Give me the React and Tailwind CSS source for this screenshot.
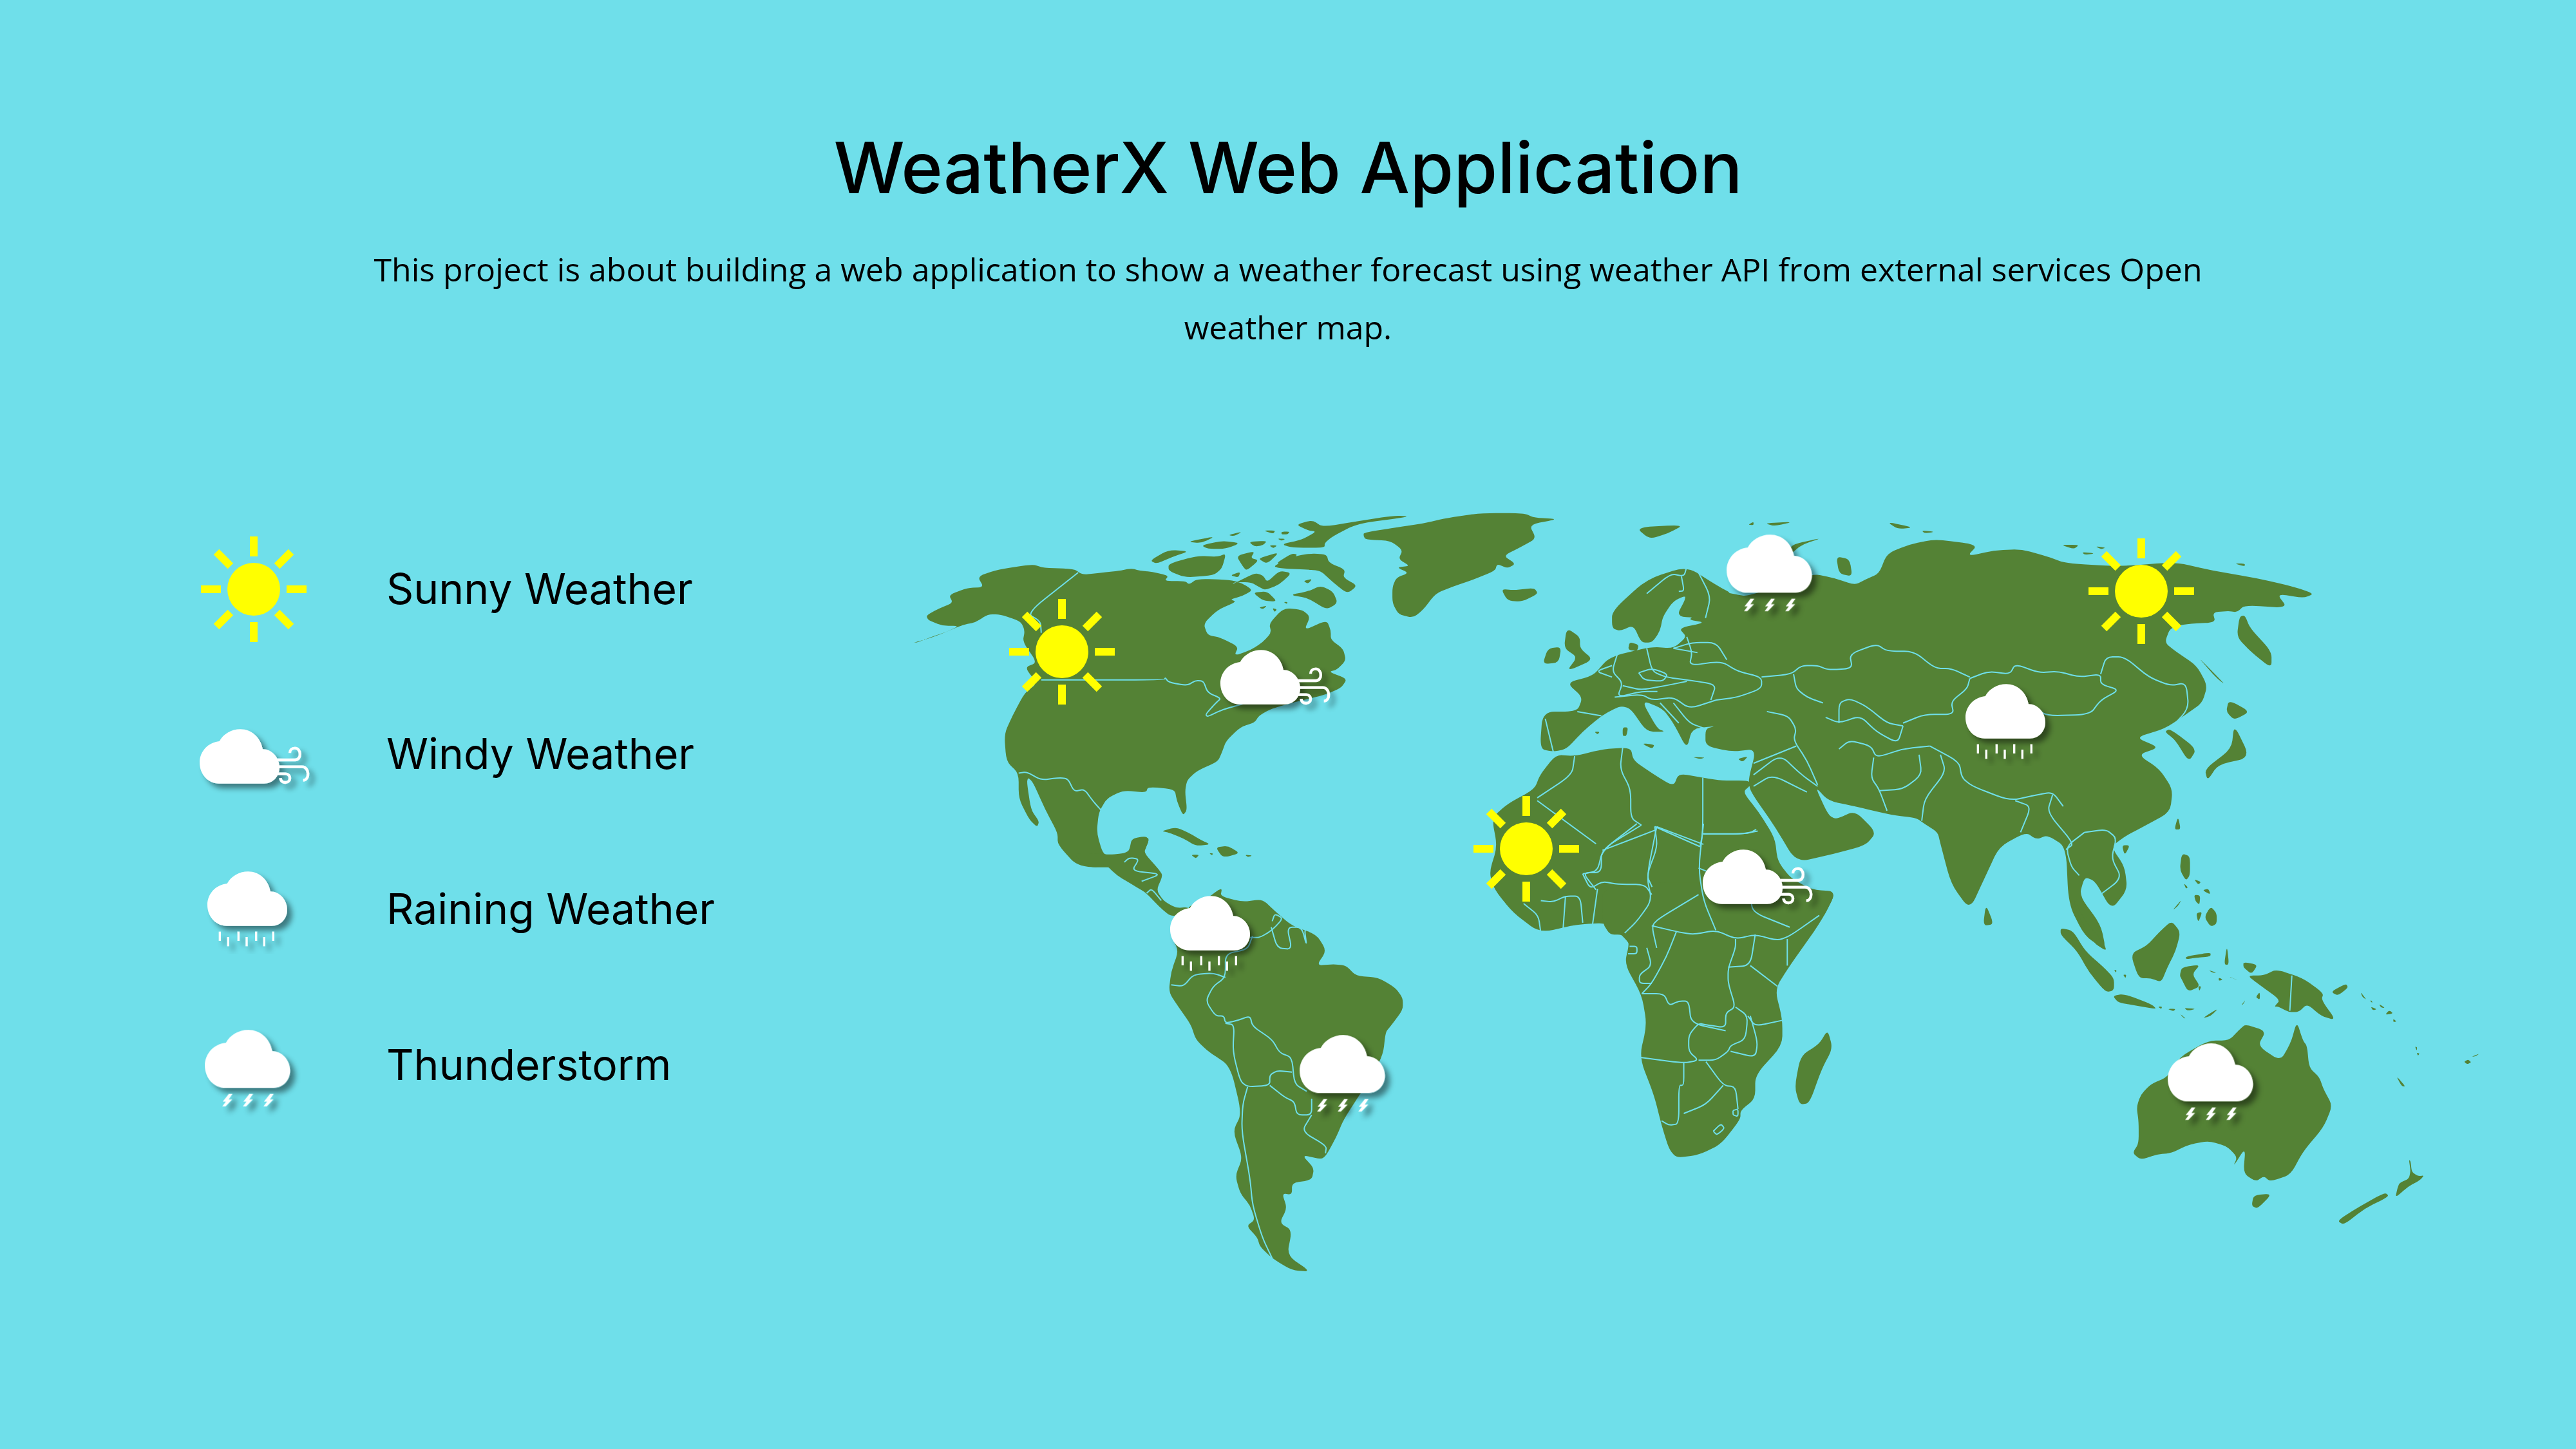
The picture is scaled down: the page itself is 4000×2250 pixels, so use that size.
const smooth = (s, closed = true) => {
  const p = s.trim().split(/\s+/).map((t) => t.split(",").map(Number));
  const f = 0.35;
  const to = (a, b) => [a[0] + (b[0] - a[0]) * f, a[1] + (b[1] - a[1]) * f];
  if (closed) {
    const n = p.length;
    let d = "";
    p.forEach((c, i) => {
      const a = to(c, p[(i - 1 + n) % n]);
      const b = to(c, p[(i + 1) % n]);
      d += `${i === 0 ? "M" : "L"}${a[0]} ${a[1]}Q${c[0]} ${c[1]} ${b[0]} ${b[1]}`;
    });
    return d + "Z";
  }
  let d = `M${p[0][0]} ${p[0][1]}`;
  for (let i = 1; i < p.length - 1; i++) {
    const a = to(p[i], p[i - 1]);
    const b = to(p[i], p[i + 1]);
    d += `L${a[0]} ${a[1]}Q${p[i][0]} ${p[i][1]} ${b[0]} ${b[1]}`;
  }
  const l = p[p.length - 1];
  return d + `L${l[0]} ${l[1]}`;
};

const Z4 = {
  land: [
    "28,614 38,612 70,590 110,565 140,540 100,540 65,515 60,495 90,465 125,440 115,405 160,375 200,372 185,325 235,295 320,272 345,288 420,292 440,318 480,310 530,300 560,290 580,300 610,305 650,322 640,345 690,345 700,360 720,335 800,340 830,355 855,385 830,410 800,425 815,435 770,470 735,530 745,580 775,590 820,630 810,670 850,645 880,610 900,570 895,530 930,462 975,470 995,500 980,560 1035,515 1045,560 1045,600 1075,640 1082,690 1060,730 1040,740 1085,770 1070,810 1030,840 960,870 900,900 870,930 860,960 825,980 790,1040 780,1090 770,1130 720,1170 695,1210 690,1260 695,1340 685,1365 670,1300 665,1250 600,1240 595,1265 540,1255 500,1290 480,1350 475,1440 490,1530 510,1540 560,1525 565,1480 605,1455 590,1530 560,1590 430,1590 380,1490 380,1440 350,1340 320,1220 308,1200 305,1220 315,1340 335,1390 330,1415 310,1380 285,1290 285,1180 255,1130 250,1010 270,930 300,830 330,790 300,720 330,700 295,610 300,560 290,520 240,490 210,490 180,525 150,535 110,565 75,590",
    "605,255 650,210 700,215 660,240 620,270",
    "650,270 720,235 770,240 790,225 780,290 760,320 690,330 650,300",
    "960,100 1000,80 1025,110 1110,85 1200,60 1240,65 1110,95 1050,150 1030,180 1030,200 950,200 925,185 975,165 1010,130 990,125",
    "695,175 765,150 730,180", "730,190 780,170 825,180 790,205 745,205", "795,145 830,130 810,150",
    "880,125 910,125 905,140", "925,130 945,130 940,142 925,142", "845,175 890,170 880,190 860,195", "915,160 935,162 925,170", "895,190 915,190 905,203",
    "815,235 860,215 850,245 870,255 840,300 830,280", "880,240 920,220 890,270 870,250", "910,270 950,225 965,230 940,270",
    "905,280 960,235 1000,225 1035,230 1040,265 1080,295 1075,330 1110,365 1085,400 1050,350 1020,300 985,295 920,290",
    "1020,365 1050,390 1062,440 1035,470 990,420 945,405 990,390",
    "800,320 825,305 820,330", "805,360 860,310 880,320 890,350 920,300 950,310 920,360 885,385 870,370 850,350 810,350",
    "855,395 890,390 915,435 880,430", "870,460 890,452 880,467", "903,463 914,468 908,480", "978,345 1000,335 990,357", "930,436 940,436 938,445",
    "1125,135 1210,110 1270,95 1330,70 1411,50 1515,50 1541,70 1600,75 1528,100 1545,160 1510,195 1465,235 1495,270 1475,290 1450,270 1445,300 1390,340 1340,370 1300,400 1270,470 1245,505 1210,490 1195,440 1195,370 1205,330 1235,310 1205,285 1238,280 1210,250 1220,210 1190,170 1130,165 1125,150",
    "1460,380 1490,385 1540,375 1550,400 1510,435 1475,430",
  ],
  lines: [
    "430,308 305,485 338,520 340,570",
    "340,775 640,775 642,765 650,785 695,800 715,778 735,780 745,830 778,855 765,875 740,925 745,935 780,905 830,880",
    "285,1180 305,1175 340,1210 385,1200 405,1205 420,1260 445,1250 465,1300 490,1350",
  ],
};

const Z6 = {
  land: [
    "-40,100 0,100 30,105 60,100 70,90 75,50 105,42 110,60 98,95 130,155 138,175 125,225 140,262 165,285 190,282 190,300 155,315 130,280 105,235 75,205 45,175 20,135 0,150 -30,130",
    "135,25 165,12 190,30 215,55 235,70 205,75 180,50 150,30", "245,80 270,75 295,100 260,115", "195,105 212,105 205,118", "305,105 320,108 310,113", "232,100 240,100 238,107",
    "190,280 230,250 250,225 258,220 255,245 300,265 340,255 365,295 400,345 450,375 470,430 450,480 485,475 510,480 530,515 575,520 610,555 625,590 625,630 600,685 590,705 585,780 560,860 540,910 505,1000 490,1060 470,1120 460,1135 420,1120 445,1165 440,1205 400,1215 400,1255 380,1250 390,1300 375,1350 400,1375 390,1460 438,1515 400,1510 360,1470 335,1430 330,1400 308,1360 325,1340 315,1290 295,1250 285,1190 300,1130 280,1040 298,980 275,820 230,770 205,730 195,680 170,620 150,570 155,500 170,430 155,380 160,330 190,300",
    "1030,335 1045,375 1070,375 1085,400 1075,475 1110,580 1120,680 1105,790 1135,920 1150,1020 1165,1100 1180,1130 1225,1120 1270,1085 1310,1000 1310,970 1340,930 1340,850 1395,750 1395,660 1380,560 1410,480 1470,340 1505,230 1460,240 1400,200 1030,200",
    "1487,697 1497,760 1475,830 1450,945 1430,950 1420,890 1432,785 1470,745",
  ],
  lines: [
    "360,330 365,305 382,320 360,360 335,385 315,385", "358,350 370,420 400,425 390,350 420,350 430,415 425,350 455,375",
    "320,380 310,425 265,440 265,520 240,550 225,600 245,650 262,650 265,675 290,665 315,650 320,685 360,730 375,775 400,790 405,880 430,905",
    "265,675 283,680 280,770 295,870 310,890 355,885 355,850 370,835 400,840", "355,885 385,925 405,940 410,985 440,985 440,930",
    "440,985 420,1040 470,1090 468,1115", "310,890 300,950 298,1040 315,1200 320,1290 340,1400 360,1470", "155,545 180,550 200,510 240,505 265,520",
    "60,130 70,115 90,120 75,160 135,170 95,195", "105,235 115,220 135,260",
    "1235,35 1310,35 1345,25", "1235,70 1140,10", "1140,10 1120,180 1130,260 1100,330 1075,370", "1235,0 1225,150 1235,260 1260,360",
    "1225,240 1145,320 1130,345 1140,420", "990,170 1020,160 1030,90 1100,0", "1030,90 1140,20",
    "990,170 1005,220 1030,195 1060,205 1115,205 1130,240", "1020,220 1010,340", "905,260 930,265 955,245 985,245 990,335", "955,245 950,360", "870,270 900,310 905,370",
    "1130,345 1180,365 1215,375 1260,360 1300,390 1340,375 1385,395 1410,380 1470,310", "1180,365 1160,450 1130,540 1110,575",
    "1300,390 1300,420 1285,490 1285,540 1300,620 1280,640 1280,690 1240,680 1225,675 1205,715 1205,770 1225,800 1195,810 1105,790",
    "1110,575 1155,575 1165,615 1185,600 1205,600 1210,675 1280,700", "1340,375 1330,480 1285,485", "1405,390 1405,480", "1330,480 1385,550",
    "1300,620 1325,650 1320,730 1290,750 1285,770 1260,800 1225,800", "1325,650 1340,685 1395,665", "1330,650 1345,740 1340,790 1290,770",
    "1240,805 1275,885 1300,890 1305,965", "1195,810 1195,885 1185,885 1185,1015 1165,1020 1150,1005", "1275,885 1240,950 1195,980",
    "1255,1040 1270,1015 1278,1030 1262,1053 1255,1040", "1295,970 1305,965 1305,990 1295,985 1295,970",
    "1085,415 1100,415 1100,440 1082,440", "1120,420 1130,480 1105,510 1105,540 1130,540",
    "1225,150 1270,180 1330,240 1335,300 1410,350",
  ],
};

const Z5 = {
  land: [
    "140,880 175,885 230,860 280,855 285,900 320,945 360,990 370,945 415,960 450,970 500,970 505,985 490,1010 520,1080 550,1170 555,1250 580,1310 620,1350 665,1355 640,1450 600,1530 570,1568 275,1568 280,1540 240,1465 180,1470 110,1500 60,1430 25,1350 15,1290 30,1200 20,1100 50,1050 100,1000 110,950",
    "135,870 110,860 115,730 180,730 190,680 160,630 210,605 235,550 260,530 320,505 360,510 385,470 370,440 420,420 385,410 430,370 440,345 420,300 470,320 500,330 620,250 660,265 700,290 720,270 745,250 760,180 800,150 850,130 930,150 910,190 960,170 1010,165 1060,190 1095,215 1200,225 1300,210 1370,240 1450,265 1520,295 1560,320 1540,335 1490,320 1510,370 1430,360 1415,385 1400,380 1370,385 1375,420 1320,425 1290,440 1280,490 1300,520 1340,570 1360,640 1350,700 1320,740 1280,790 1225,820 1270,855 1230,880 1270,930 1295,1000 1290,1080 1240,1130 1205,1165 1180,1200 1205,1270 1210,1350 1180,1420 1150,1320 1130,1305 1120,1370 1160,1470 1170,1560 1130,1510 1100,1400 1095,1200 1060,1160 1040,1175 1020,1150 970,1200 945,1300 915,1420 880,1330 860,1190 855,1150 830,1120 815,1100 770,1090 700,1060 650,1040 625,990 650,1090 665,1105 700,1075 740,1150 720,1195 660,1225 590,1255 550,1130 505,1010 500,970 515,860 470,870 420,850 420,790 440,780 395,790 385,860 360,770 340,720 300,690 330,790 345,800 310,800 280,720 260,710 225,745 190,800 160,860",
    "245,440 245,380 310,270 385,225 440,290 470,320 450,340 385,325 360,345 340,400 335,450 320,490 300,490 285,430 260,450",
    "365,400 385,330 370,310 440,300 445,345 430,370 420,405",
    "278,488 295,498 292,520 275,515",
    "1290,790 1340,860 1325,905 1300,830 1280,800",
    "580,150 640,125 600,150 575,190", "290,90 380,80 350,110 315,130", "530,75 585,70 550,85", "500,80 510,70 510,82", "760,70 810,90 780,95", "825,100 850,105 830,110", "1085,150 1120,150 1110,165", "1150,155 1170,160 1160,165", "1125,175 1150,180 1130,185", "1410,215 1430,215 1430,225",
    "665,190 690,200 695,260 670,250",
    "160,440 185,470 185,510 210,550 160,590 180,540 155,510", "125,510 150,505 145,560 115,565", "265,785 275,785 272,815 265,815", "212,800 222,800 218,810", "300,840 325,845 320,860", "395,888 420,890 410,895", "480,895 500,885 490,905",
    "1340,535 1395,640 1375,610", "1420,400 1430,395 1440,440 1480,520 1480,580 1440,520 1415,470",
    "1400,690 1440,730 1410,760 1395,730", "1410,775 1440,890 1380,915 1360,970 1355,930 1405,860", "1305,1095 1310,1140 1298,1140", "1200,1195 1215,1195 1205,1230", "945,1400 960,1470 940,1475",
  ],
  lines: [
    "385,470 395,525 390,570 450,555 480,590 525,610 525,650 480,680 440,690", "255,530 245,590 265,630 255,680 300,660 330,660", "310,510 320,590 345,610 385,620 440,635 430,690",
    "295,595 320,580 350,600 340,625 305,620 295,595", "245,570 215,590 245,610", "265,640 300,655 345,640 385,625", "250,680 300,670 320,690 360,680 390,720 440,690",
    "360,700 390,770 420,790", "335,700 370,770", "120,755 135,870", "180,730 225,745", "360,510 395,490 440,490 460,550", "360,510 405,525",
    "310,320 355,250 380,260 385,225", "375,260 380,310 370,312", "405,240 430,330 420,405",
    "525,610 580,600 600,570 630,570 650,585 695,580 690,530 740,495 760,520 810,520 850,580 880,580 915,610",
    "585,600 590,650 610,680 640,700", "915,615 910,650 880,695 885,740 830,740 790,770",
    "915,615 950,590 990,600 1000,565 1045,595 1080,590 1120,610 1160,600 1160,635 1195,655 1160,690 1140,740 1060,745 1040,720",
    "1160,600 1170,540 1205,540 1250,610 1290,640 1320,630 1325,720 1290,790",
    "670,770 670,700 690,685 720,710 760,770 790,780", "645,750 670,770 710,745 740,800 780,840 790,780", "535,730 575,745 590,790 585,830 610,900 630,985",
    "670,860 690,830 730,850 740,890 790,860 840,850", "735,890 730,960 745,1000 760,1075", "860,880 870,940 830,1035 825,1110", "745,1005 790,1000 825,950 820,880",
    "840,850 895,905 900,960 920,990 990,1040 1040,1020 1070,1010 1090,1060", "1000,1040 1030,1060 1010,1150", "1070,1020 1060,1080 1110,1190 1095,1210",
    "1130,1150 1095,1200 1105,1270 1120,1300", "1130,1150 1170,1140 1190,1170 1180,1240 1200,1310 1150,1380",
    "510,910 590,850", "510,950 560,880 600,950 630,990", "510,990 545,950 610,1010",
    "105,1030 170,950 175,885", "265,855 260,930 280,1000 280,1100 300,1125", "415,960 415,1150 410,1200", "415,1155 500,1155 515,1140", "325,1130 410,1200",
    "300,1125 225,1210 225,1290 190,1290 215,1350", "105,1040 215,1190", "325,1130 330,1200 310,1300 320,1340",
  ],
};

const Z7 = {
  land: [
    "470,385 500,395 530,470 575,530 600,570 600,615 580,622 540,550 510,470 470,410",
    "500,270 530,360 575,440 582,470 550,440 510,330",
    "740,358 762,400 750,470 730,530 715,585 690,570 660,570 640,480 680,450 710,400",
    "775,490 835,475 835,490 800,495 775,500", "765,530 810,520 790,555 810,600 780,620 765,575 760,560",
    "925,560 965,560 995,537 1060,570 1110,625 1105,650 1140,725 1105,710 1070,665 1050,695 1025,695 1000,675 990,675 1005,650 950,590",
    "915,510 950,520 935,555 915,530", "597,635 625,628 690,665 705,685 650,670 610,660",
    "707,675 717,675 715,684", "730,683 750,683 745,692", "770,680 800,683 780,690", "815,718 855,680 835,710", "760,700 775,720 768,715",
    "765,110 785,120 785,190 775,210 760,170", "770,220 780,235 775,240", "835,305 850,330 850,370 835,380 820,345", "800,330 815,325 805,365", "742,320 765,280 755,305",
    "795,262 810,265 808,300 798,285", "815,245 830,240 835,262", "795,205 812,215 805,225",
    "875,450 880,520 868,520", "830,540 850,550 840,550", "880,565 905,580 890,570", "855,568 865,575 855,580", "945,640 955,620 955,650", "910,670 920,650 915,665", "805,600 812,600 808,618",
    "1128,620 1165,590 1170,605 1145,635", "1200,620 1215,650 1205,640", "1225,650 1230,660 1225,658", "1225,675 1240,685 1230,688", "1245,665 1260,680 1250,678", "1270,688 1280,700 1260,705", "1280,720 1288,730 1280,732",
    "1333,822 1338,825 1337,838", "1337,845 1344,848 1340,856", "1452,878 1462,870 1470,880 1460,888", "1470,860 1490,848 1480,858", "1287,930 1310,970 1300,968",
    "1045,730 1060,800 1070,820 1075,900 1100,935 1110,980 1132,1040 1110,1120 1060,1210 1030,1295 980,1320 965,1300 945,1320 915,1290 920,1195 890,1265 900,1230 875,1190 830,1170 780,1185 740,1215 705,1220 665,1240 645,1215 660,1180 660,1100 655,1045 665,1000 690,960 730,935 760,860 830,800 880,800 905,760 920,740 970,765 950,820 1005,875 1030,810",
    "940,1370 985,1365 950,1420 935,1410",
    "1318,1240 1322,1245 1325,1285 1340,1300 1355,1298 1345,1315 1315,1340 1285,1380 1290,1345 1295,1325 1318,1310 1322,1280",
    "1260,1360 1270,1375 1210,1420 1160,1480 1143,1465 1200,1410",
    "600,540 606,540 605,550", "622,557 630,557 628,570",
  ],
  lines: ["1033,560 1028,690"],
};

const GROUPS = [
  { key: "z4", t: "translate(0 0) scale(0.63776 0.35714)", d: Z4 },
  { key: "z5", t: "translate(900 0) scale(0.82919 0.44643)", d: Z5 },
  { key: "z6", t: "translate(300 500) scale(0.76531 0.45918)", d: Z6 },
  { key: "z7", t: "translate(1500 500) scale(0.63776 0.42092)", d: Z7 },
];

const CLOUD = "M268 410H478C520 410 550 375 550 335C550 290 515 250 472 250C462 195 420 157 368 157C325 157 288 180 270 213C218 218 178 260 178 312C178 368 218 410 268 410Z";

function Sun({ className, style }) {
  const rays = [0, 45, 90, 135, 180, 225, 270, 315];
  return (
    <svg viewBox="-90 -90 180 180" className={`w-[180px] h-[180px] ${className || ""}`} style={style}>
      <circle r="41" fill="#ffff00" />
      {rays.map((a) => (
        <rect key={a} x="-6" y="-82" width="12" height="31" fill="#ffff00" transform={`rotate(${a})`} />
      ))}
    </svg>
  );
}

function Weather({ kind, className, style, scale = 1 }) {
  return (
    <svg
      viewBox="130 120 640 420"
      className={`${className || ""}`}
      style={{ width: (640 / 3) * scale, height: (420 / 3) * scale, ...style }}
    >
      <defs>
        <filter id={`sh-${kind}`} x="-20%" y="-20%" width="150%" height="150%">
          <feDropShadow dx="22" dy="22" stdDeviation="12" floodColor="#000000" floodOpacity="0.45" />
        </filter>
      </defs>
      <g filter={`url(#sh-${kind})`} fill="#ffffff">
        {kind === "wind" && (
          <g fill="none" stroke="#ffffff" strokeWidth="13">
            <path d="M540 300H622C655 300 652 245 622 245C607 245 598 255 598 268" />
            <path d="M540 332H655C690 332 692 395 660 395" />
            <path d="M540 365H578C605 365 605 405 578 405C565 405 555 398 555 385" />
          </g>
        )}
        {kind === "rain" &&
          [[236, 437], [323, 437], [405, 437], [485, 437], [275, 462], [361, 462], [443, 462]].map(([x, y]) => (
            <rect key={x} x={x - 5} y={y} width="10" height="43" />
          ))}
        {kind === "storm" &&
          [0, 90, 180].map((dx) => (
            <path key={dx} transform={`translate(${dx} 0)`} d="M283 437H298L282 461H297L268 491H254L270 470H256Z" />
          ))}
        <path d={CLOUD} />
      </g>
    </svg>
  );
}

const legend = [
  { label: "Sunny Weather", h: "h-[271px]", icon: <Sun className="ml-[2px]" /> },
  { label: "Windy Weather", h: "h-[240px]", icon: <Weather kind="wind" className="ml-[-8px] mt-[40px]" /> },
  { label: "Raining Weather", h: "h-[242px]", icon: <Weather kind="rain" className="ml-[4px]" /> },
  { label: "Thunderstorm", h: "h-[242px]", icon: <Weather kind="storm" scale={1.067} className="ml-[-1px] mt-[16px]" /> },
];

const pins = [
  { kind: "sun", x: 1649, y: 1013 },
  { kind: "sun", x: 3325, y: 919 },
  { kind: "sun", x: 2370, y: 1319 },
  { kind: "wind", x: 1895, y: 1010 },
  { kind: "wind", x: 2644, y: 1320 },
  { kind: "rain", x: 3052, y: 1063 },
  { kind: "rain", x: 1817, y: 1392 },
  { kind: "storm", x: 2681, y: 831 },
  { kind: "storm", x: 2018, y: 1608 },
  { kind: "storm", x: 3366, y: 1621 },
];

export default function App() {
  return (
    <div className="w-[4000px] h-[2250px] bg-[#6fdfea] overflow-hidden flex flex-col items-center text-black">
      <h1 className="mt-[190px] text-[110px] leading-[140px] font-medium text-black" style={{ fontFamily: "Inter, sans-serif" }}>
        WeatherX Web Application
      </h1>
      <p className="mt-[43px] w-[2900px] text-center text-[50px] leading-[90px] text-black" style={{ fontFamily: "'Open Sans', sans-serif" }}>
        This project is about building a web application to show a weather forecast using weather API from external services Open weather map.
      </p>
      <div className="mt-[226px] w-full flex flex-1">
        <div className="w-[1400px] pl-[302px] flex flex-col shrink-0">
          {legend.map((l) => (
            <div key={l.label} className={`flex items-center ${l.h}`}>
              <div className="w-[298px] flex items-center shrink-0">{l.icon}</div>
              <span className="text-[66px] whitespace-nowrap" style={{ fontFamily: "Inter, sans-serif" }}>{l.label}</span>
            </div>
          ))}
        </div>
        <div className="relative w-[2600px] h-[1300px]">
          <svg viewBox="0 0 2600 1300" className="w-[2600px] h-[1300px] block">
            {GROUPS.map((g) => (
              <g key={g.key} transform={g.t}>
                <path d={g.d.land.map((s) => smooth(s)).join("")} fill="#548235" />
              </g>
            ))}
            {GROUPS.map((g) => (
              <g key={g.key + "l"} transform={g.t}>
                {g.d.lines.map((s, i) => (
                  <path key={i} d={smooth(s, false)} fill="none" stroke="#6fdfea" strokeWidth="2" vectorEffect="non-scaling-stroke" />
                ))}
              </g>
            ))}
          </svg>
          {pins.map((p, i) =>
            p.kind === "sun" ? (
              <Sun key={i} className="absolute" style={{ left: p.x - 1400 - 90, top: p.y - 780 - 90 }} />
            ) : (
              <Weather
                key={i}
                kind={p.kind}
                scale={p.kind === "storm" ? 1.067 : 1}
                className="absolute"
                style={
                  p.kind === "storm"
                    ? { left: p.x - 1400 - (48 / 3) * 1.067, top: p.y - 780 - (37 / 3) * 1.067 }
                    : { left: p.x - 1400 - 48 / 3, top: p.y - 780 - 37 / 3 }
                }
              />
            )
          )}
        </div>
      </div>
    </div>
  );
}
